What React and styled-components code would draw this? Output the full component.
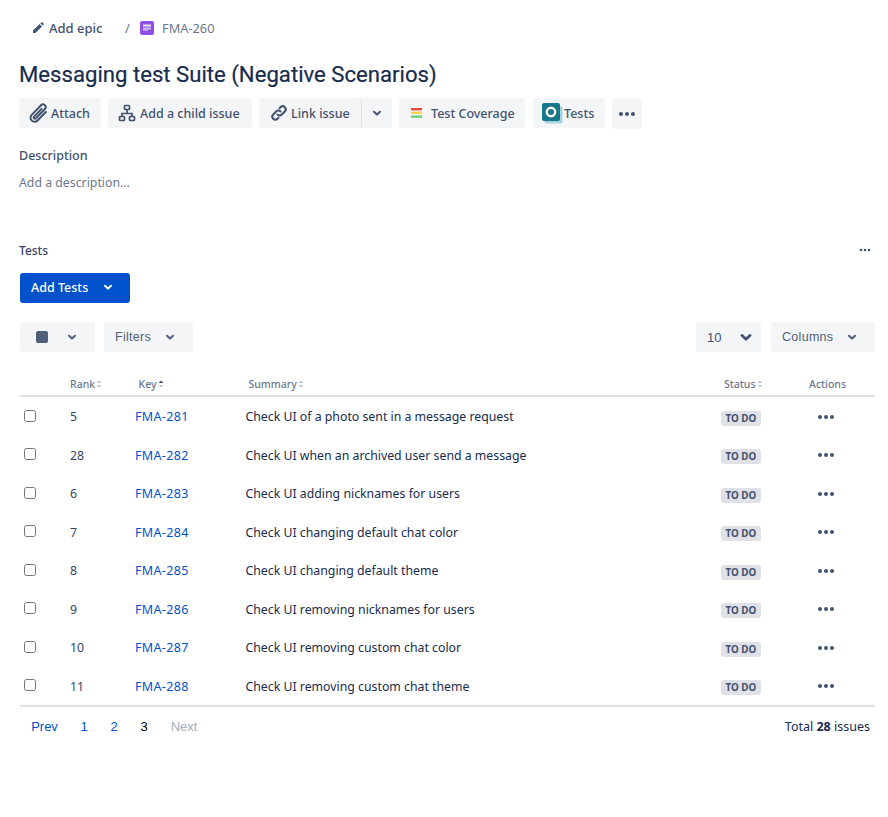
import styled, { createGlobalStyle } from "styled-components";

const rows = [
  { rank: 5, key: "FMA-281", summary: "Check UI of a photo sent in a message request" },
  { rank: 28, key: "FMA-282", summary: "Check UI when an archived user send a message" },
  { rank: 6, key: "FMA-283", summary: "Check UI adding nicknames for users" },
  { rank: 7, key: "FMA-284", summary: "Check UI changing default chat color" },
  { rank: 8, key: "FMA-285", summary: "Check UI changing default theme" },
  { rank: 9, key: "FMA-286", summary: "Check UI removing nicknames for users" },
  { rank: 10, key: "FMA-287", summary: "Check UI removing custom chat color" },
  { rank: 11, key: "FMA-288", summary: "Check UI removing custom chat theme" },
];

const Chevron = ({ size = 16 }) => (
  <svg width={size} height={size} viewBox="0 0 16 16" fill="none">
    <path d="M5 6.8 8 9.6l3-2.8" stroke="currentColor" strokeWidth="2" strokeLinecap="round" strokeLinejoin="round" />
  </svg>
);

const Dots = ({ size = 18 }) => (
  <svg width={size} height={size / 3} viewBox="0 0 18 6" fill="currentColor">
    <circle cx="3" cy="3" r="2" />
    <circle cx="9" cy="3" r="2" />
    <circle cx="15" cy="3" r="2" />
  </svg>
);

const SortArrows = ({ up }) => (
  <SortIcon viewBox="0 0 6 8">
    <path d="M3 .5 5.5 3h-5z" fill={up ? "#42526e" : "#c1c7d0"} />
    <path d="M3 7.5.5 5h5z" fill="#c1c7d0" />
  </SortIcon>
);

function App() {
  return (
    <Page>
      <GlobalStyle />
      <Breadcrumbs>
        <EpicLink>
          <svg width="12" height="12" viewBox="0 0 12 12" fill="#42526e">
            <path d="M1 8.6 7.6 2l2.4 2.4L3.4 11H1z" />
            <path d="M8.4 1.2 9.3.4a.8.8 0 0 1 1.1 0l1.2 1.2a.8.8 0 0 1 0 1.1l-.9.9z" />
          </svg>
          Add epic
        </EpicLink>
        <Slash>/</Slash>
        <svg width="14" height="14" viewBox="0 0 14 14">
          <rect width="14" height="14" rx="2" fill="#904ee2" />
          <rect x="3" y="3.5" width="8" height="2" fill="#fff" opacity=".85" />
          <rect x="3" y="6.5" width="8" height="2" fill="#fff" opacity=".6" />
          <rect x="3" y="8.5" width="5" height="1.5" fill="#fff" opacity=".45" />
        </svg>
        <ParentKey>FMA-260</ParentKey>
      </Breadcrumbs>

      <Title>Messaging test Suite (Negative Scenarios)</Title>

      <Toolbar>
        <ToolButton $width={82} $gap={3}>
          <svg width="19" height="20" viewBox="3 2.5 14 15" fill="none" stroke="#42526e" strokeWidth="1.5" strokeLinecap="round">
            <path d="M15.5 9.2 9.3 15.6a3 3 0 0 1-4.4-4.2l7-7.2a2 2 0 0 1 2.9 2.8l-6.8 7a.9.9 0 0 1-1.3-1.3l5.6-5.8" />
          </svg>
          Attach
        </ToolButton>
        <ToolButton $width={144} $gap={4}>
          <svg width="18" height="18" viewBox="0 0 18 18" fill="none" stroke="#42526e" strokeWidth="1.7">
            <rect x="6.5" y="1.5" width="5" height="4" rx=".8" />
            <rect x="1.5" y="12.5" width="5" height="4" rx=".8" />
            <rect x="11.5" y="12.5" width="5" height="4" rx=".8" />
            <path d="M9 5.5v4M4 12.5V9.5h10v3" />
          </svg>
          Add a child issue
        </ToolButton>
        <SplitButton>
          <SplitMain $gap={2}>
            <svg width="20" height="20" viewBox="0 0 20 20" fill="none" stroke="#42526e" strokeWidth="2" strokeLinecap="round">
              <path d="M8.5 11.5a3 3 0 0 0 4.3 0l3-3a3 3 0 0 0-4.3-4.3l-1 1" />
              <path d="M11.5 8.5a3 3 0 0 0-4.3 0l-3 3a3 3 0 0 0 4.3 4.3l1-1" />
            </svg>
            Link issue
          </SplitMain>
          <SplitArrow>
            <Chevron />
          </SplitArrow>
        </SplitButton>
        <ToolButton $width={126} $pad={12}>
          <CoverageIcon viewBox="0 0 12 12">
            <rect y="1" width="11" height="2.4" fill="#e5493a" />
            <rect y="4.6" width="11" height="2.4" fill="#ffd351" />
            <rect y="8.4" width="11" height="2.4" fill="#6fcf7c" />
          </CoverageIcon>
          Test Coverage
        </ToolButton>
        <TestsButton $width={72} $pad={9} $gap={1}>
          <svg width="21" height="21" viewBox="0 0 21 21">
            <rect x="2.5" y="3" width="18" height="17.5" rx="2" fill="#a7d3d8" />
            <rect x="0" y="0" width="18" height="18" rx="2" fill="#17788d" />
            <circle cx="9" cy="9" r="4.2" fill="none" stroke="#fff" strokeWidth="2.4" />
          </svg>
          Tests
        </TestsButton>
        <MoreButton>
          <Dots />
        </MoreButton>
      </Toolbar>

      <SectionLabel>Description</SectionLabel>
      <Placeholder>Add a description...</Placeholder>

      <TestsHeader>
        <TestsLabel>Tests</TestsLabel>
        <TestsMenu>
          <Dots size={12} />
        </TestsMenu>
      </TestsHeader>

      <PrimaryButton>
        Add Tests
        <Chevron />
      </PrimaryButton>

      <FilterBar>
        <FilterGroup>
          <FilterButton $width={75}>
            <StatusSquare />
            <Chevron />
          </FilterButton>
          <FilterButton $width={89}>
            Filters
            <Chevron />
          </FilterButton>
        </FilterGroup>
        <FilterGroup $gap={10}>
          <PageSize>
            10
            <Chevron size={22} />
          </PageSize>
          <FilterButton $width={104}>
            Columns
            <Chevron />
          </FilterButton>
        </FilterGroup>
      </FilterBar>

      <Table>
        <HeadRow>
          <span />
          <HeadCell>
            Rank
            <SortArrows />
          </HeadCell>
          <HeadCell $indent={3}>
            Key
            <SortArrows up />
          </HeadCell>
          <HeadCell $indent={3}>
            Summary
            <SortArrows />
          </HeadCell>
          <HeadCell $indent={3}>
            Status
            <SortArrows />
          </HeadCell>
          <HeadCell>Actions</HeadCell>
        </HeadRow>
        {rows.map((row) => (
          <Row key={row.key}>
            <Check type="checkbox" />
            <Rank>{row.rank}</Rank>
            <KeyLink>{row.key}</KeyLink>
            <Summary>{row.summary}</Summary>
            <span>
              <Lozenge>TO DO</Lozenge>
            </span>
            <RowActions>
              <Dots />
            </RowActions>
          </Row>
        ))}
      </Table>

      <Pagination>
        <Pages>
          <PageLink $width={49}>Prev</PageLink>
          <PageLink $width={30}>1</PageLink>
          <PageLink $width={30}>2</PageLink>
          <PageLink $width={30} $current>3</PageLink>
          <PageLink $width={50} $disabled>Next</PageLink>
        </Pages>
        <Total>
          Total <b>28</b> issues
        </Total>
      </Pagination>
    </Page>
  );
}

export default App;

const GlobalStyle = createGlobalStyle`
  html, body {
    margin: 0;
    background: #fff;
  }
  body {
    font-family: "Noto Sans", "Open Sans", "Liberation Sans", sans-serif;
    color: #172b4d;
  }
`;

const Page = styled.div`
  width: 888px;
  height: 817px;
  box-sizing: border-box;
  padding: 0 13px 0 20px;
  overflow: hidden;
`;

const Breadcrumbs = styled.div`
  display: flex;
  align-items: center;
  height: 18px;
  padding: 19px 0 0 12px;
  font-size: 13px;
`;

const EpicLink = styled.span`
  display: flex;
  align-items: center;
  gap: 5px;
  width: 93px;
  font-weight: 500;
  color: #42526e;
`;

const Slash = styled.span`
  width: 15px;
  color: #6b778c;
`;

const ParentKey = styled.span`
  margin-left: 8px;
  font-size: 12.8px;
  color: #6b778c;
`;

const Title = styled.h1`
  margin: 22px 0 0 -1px;
  height: 31px;
  font-family: Roboto, "Noto Sans", sans-serif;
  font-size: 22.15px;
  line-height: 31px;
  font-weight: 400;
  color: #172b4d;
  -webkit-text-stroke: 0.2px #172b4d;
  white-space: nowrap;
`;

const Toolbar = styled.div`
  display: flex;
  gap: 7px;
  margin: 8px 0 0 -1px;
`;

const ToolButton = styled.button`
  display: flex;
  align-items: center;
  gap: ${(p) => p.$gap ?? 5}px;
  width: ${(p) => p.$width}px;
  height: 30px;
  padding: 0 0 0 ${(p) => p.$pad ?? 10}px;
  border: 0;
  border-radius: 3px;
  background: #f4f5f7;
  color: #42526e;
  font: 500 12.5px "Noto Sans", sans-serif;
  white-space: nowrap;
`;

const TestsButton = styled(ToolButton)`
  margin-left: 1px;
`;

const CoverageIcon = styled.svg`
  width: 12px;
  height: 12px;
  margin-right: 3px;
`;

const SplitButton = styled.div`
  display: flex;
  width: 133px;
  height: 30px;
  border-radius: 3px;
  background: #f4f5f7;
`;

const SplitMain = styled(ToolButton)`
  width: 103px;
  background: none;
  border-right: 1px solid #dfe1e6;
`;

const SplitArrow = styled.span`
  display: flex;
  align-items: center;
  justify-content: center;
  flex: 1;
  color: #42526e;
`;

const MoreButton = styled.button`
  display: flex;
  align-items: center;
  justify-content: center;
  width: 30px;
  height: 31px;
  padding: 0;
  border: 0;
  border-radius: 3px;
  background: #f4f5f7;
  color: #42526e;
`;

const SectionLabel = styled.div`
  margin: 17px 0 0 -1px;
  height: 20px;
  font-size: 12.5px;
  line-height: 20px;
  font-weight: 500;
  color: #42526e;
`;

const Placeholder = styled.div`
  margin: 7px 0 0 -1px;
  height: 20px;
  font-size: 12.3px;
  line-height: 20px;
  color: #6b778c;
`;

const TestsHeader = styled.div`
  display: flex;
  align-items: center;
  justify-content: space-between;
  height: 18px;
  margin: 48px 4px 0 -1px;
`;

const TestsLabel = styled.span`
  font-size: 12px;
  font-weight: 500;
  color: #344563;
`;

const TestsMenu = styled.span`
  display: flex;
  color: #42526e;
`;

const PrimaryButton = styled.button`
  display: flex;
  align-items: center;
  justify-content: space-between;
  box-sizing: border-box;
  width: 110px;
  height: 30px;
  margin-top: 14px;
  padding: 0 14px 2px 11px;
  border: 0;
  border-radius: 3px;
  background: #0052cc;
  color: #fff;
  font: 500 12.5px "Noto Sans", sans-serif;
`;

const FilterBar = styled.div`
  display: flex;
  justify-content: space-between;
  margin-top: 19px;
`;

const FilterGroup = styled.div`
  display: flex;
  gap: ${(p) => p.$gap ?? 9}px;
`;

const FilterButton = styled.button`
  display: flex;
  align-items: center;
  justify-content: space-between;
  box-sizing: border-box;
  width: ${(p) => p.$width}px;
  height: 30px;
  padding: 0 15px 1px 11px;
  border: 0;
  border-radius: 3px;
  background: #f4f5f7;
  color: #505f79;
  font: 400 12.5px "Liberation Sans", sans-serif;
  letter-spacing: 0.3px;
`;

const StatusSquare = styled.span`
  width: 12px;
  height: 12px;
  margin-left: 5px;
  border-radius: 2px;
  background: #505f79;
`;

const PageSize = styled(FilterButton)`
  width: 65px;
  padding: 0 4px 0 11px;
  color: #42526e;
  font-size: 13px;
  letter-spacing: 0;
`;

const Table = styled.div`
  box-sizing: border-box;
  height: 334px;
  margin-top: 21px;
  border-bottom: 2px solid #dfe1e6;
`;

const columns = "50px 65.5px 110px 475.5px 88px 1fr";

const HeadRow = styled.div`
  display: grid;
  grid-template-columns: ${columns};
  align-items: center;
  height: 22px;
  margin-bottom: 0.5px;
  border-bottom: 2px solid #dfe1e6;
`;

const HeadCell = styled.span`
  display: flex;
  align-items: center;
  gap: 1px;
  padding-left: ${(p) => p.$indent ?? 0}px;
  font-size: 10.5px;
  font-weight: 500;
  color: #6b778c;
`;

const SortIcon = styled.svg`
  width: 6px;
  height: 8px;
`;

const Row = styled.div`
  display: grid;
  grid-template-columns: ${columns};
  align-items: center;
  height: 38.5px;
  font-size: 12.3px;
`;

const Check = styled.input`
  width: 12px;
  height: 12px;
  margin: -2px 0 0 4px;
`;

const Rank = styled.span`
  color: #344563;
`;

const KeyLink = styled.a`
  margin-left: -0.5px;
  font-size: 12.5px;
  letter-spacing: 0.35px;
  color: #0052cc;
`;

const Summary = styled.span`
  color: #172b4d;
`;

const Lozenge = styled.span`
  display: inline-block;
  margin-top: 3px;
  padding: 0 4.5px;
  border-radius: 3px;
  background: #dfe1e6;
  color: #42526e;
  font-size: 9.8px;
  line-height: 15px;
  font-weight: 700;
  white-space: nowrap;
`;

const RowActions = styled.span`
  display: flex;
  padding-left: 8px;
  color: #42526e;
`;

const Pagination = styled.div`
  display: flex;
  align-items: center;
  justify-content: space-between;
  height: 38px;
  font-size: 12.5px;
`;

const Pages = styled.div`
  display: flex;
  align-items: center;
`;

const PageLink = styled.span`
  width: ${(p) => p.$width}px;
  text-align: center;
  font-family: "Liberation Sans", sans-serif;
  font-size: 13px;
  color: ${(p) => (p.$current ? "#000" : p.$disabled ? "#a5adba" : "#0052cc")};
`;

const Total = styled.span`
  margin-right: 5px;
  color: #172b4d;

  b {
    font-weight: 700;
  }
`;
